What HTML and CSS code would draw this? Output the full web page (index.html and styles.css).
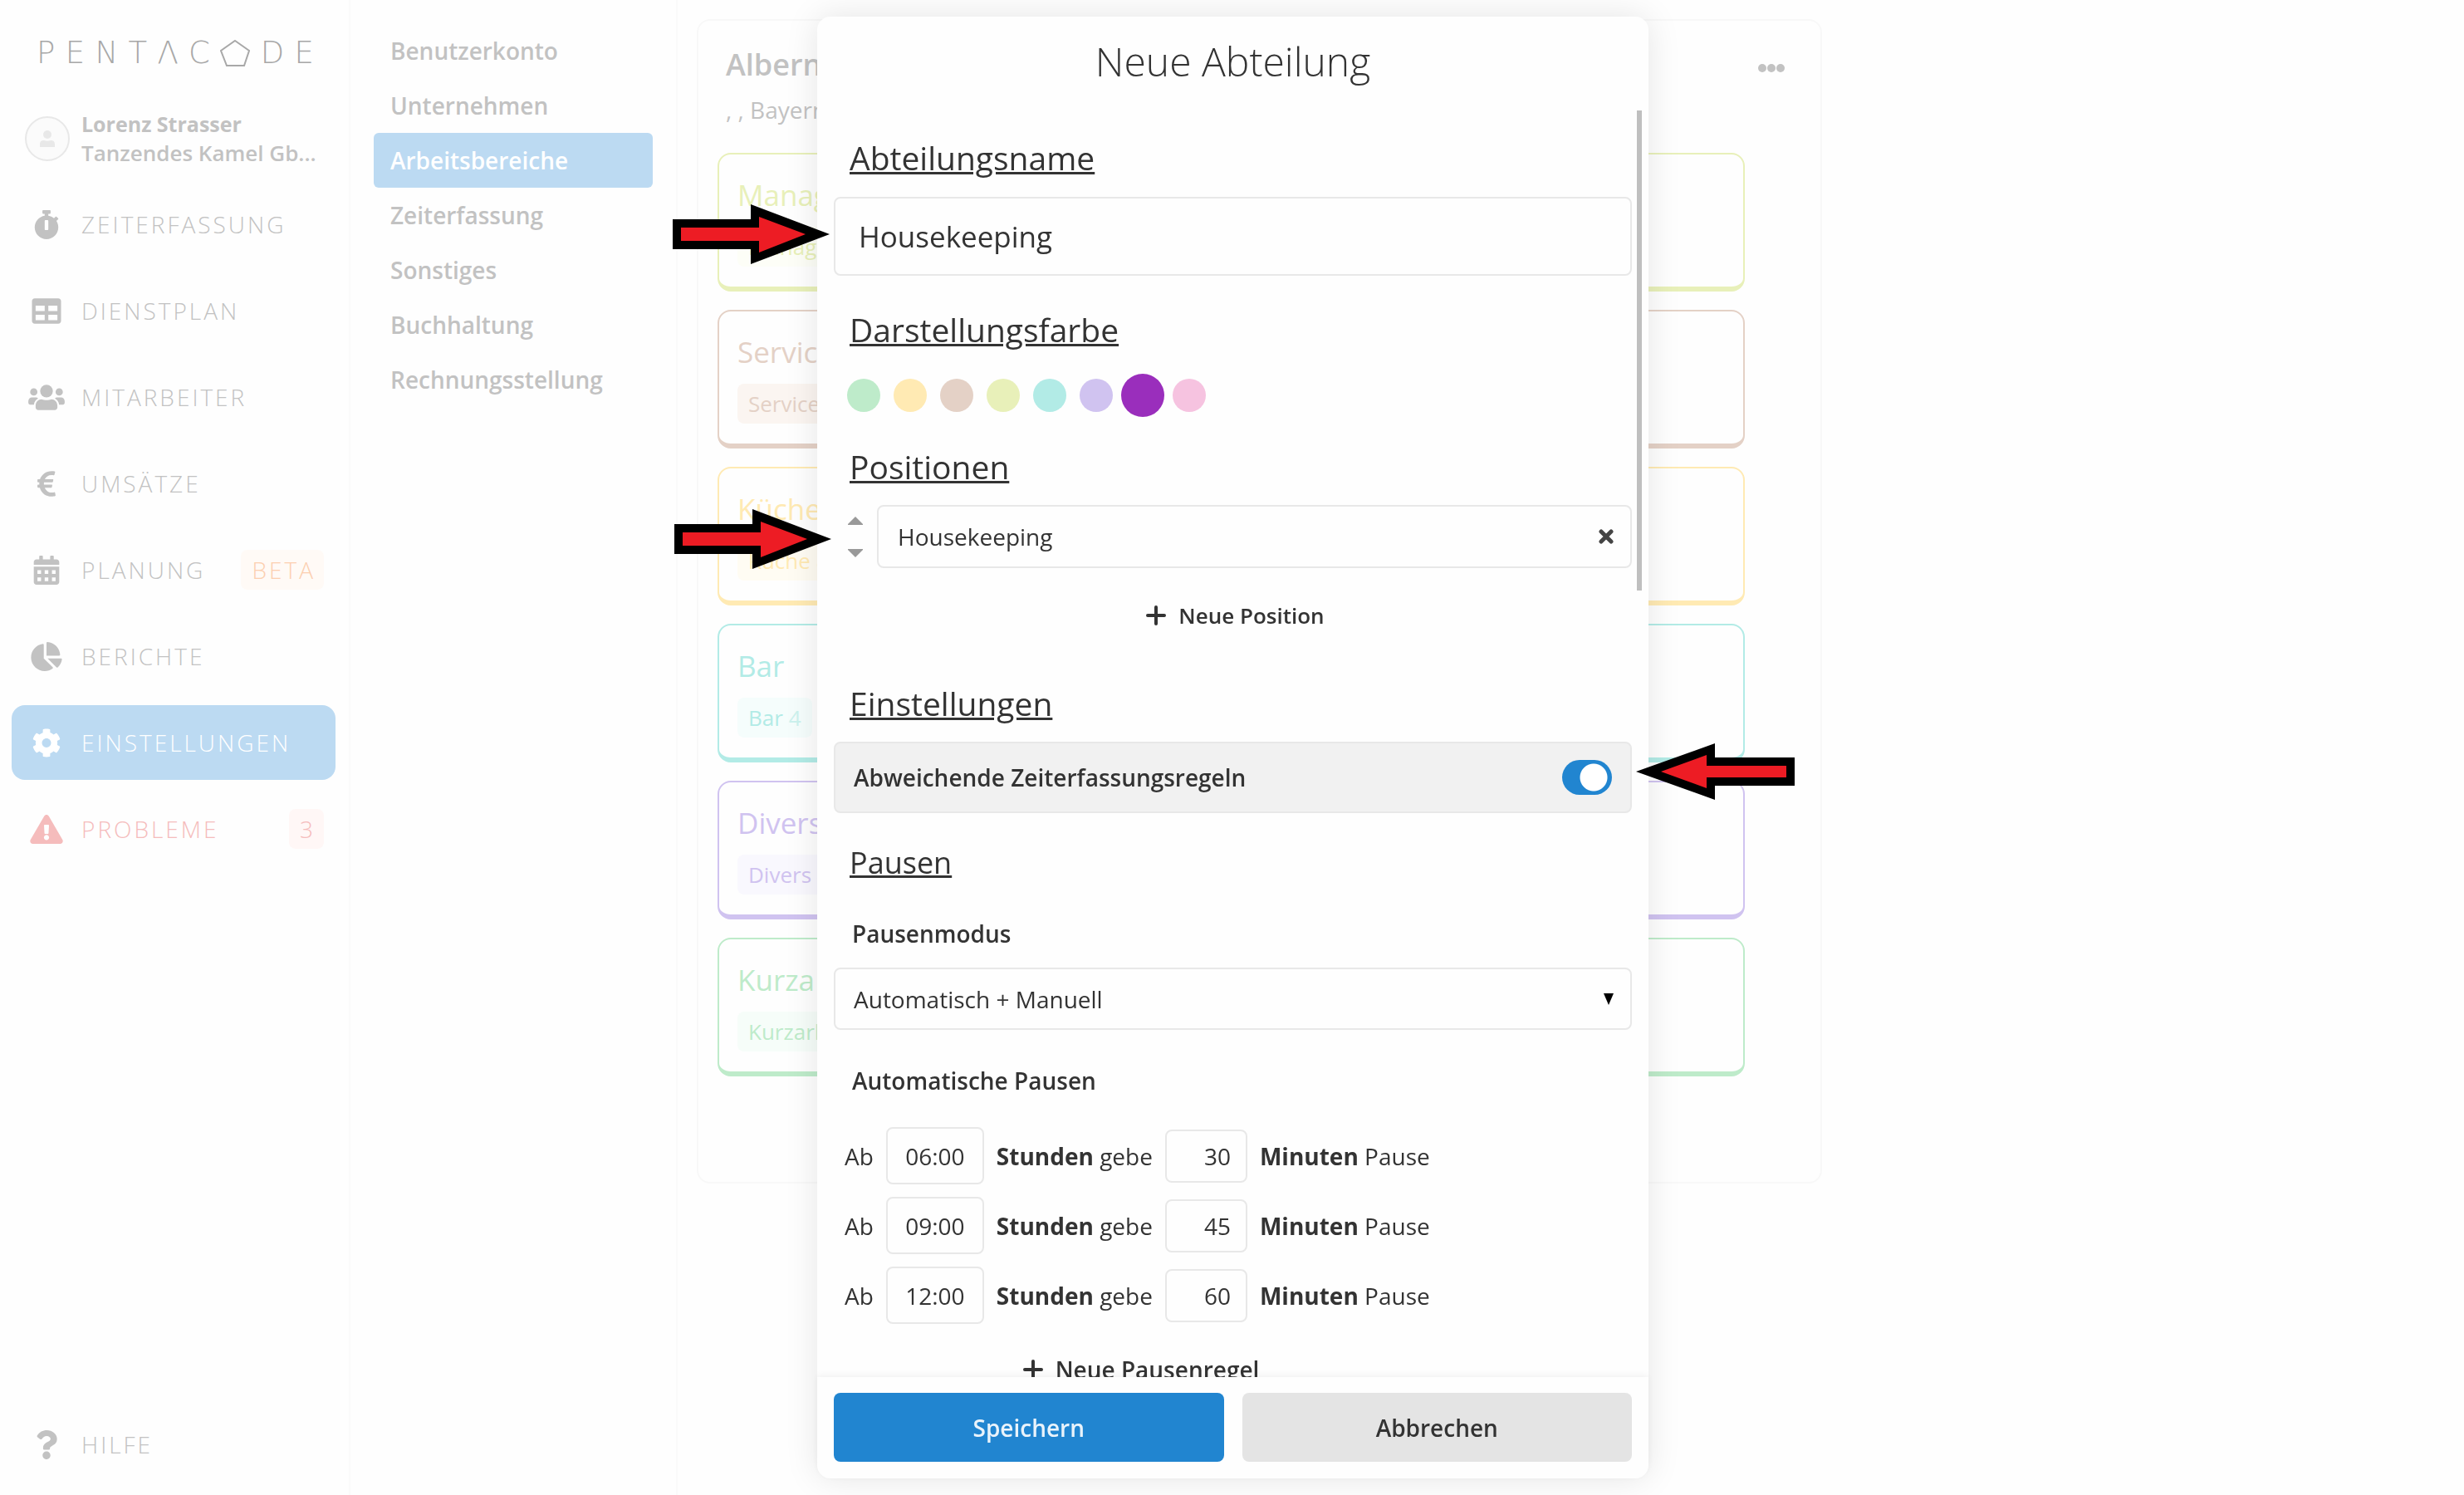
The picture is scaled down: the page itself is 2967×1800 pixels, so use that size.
FILE: index.html
```html
<!DOCTYPE html>
<html lang="de">
<head>
<meta charset="utf-8">
<meta name="viewport" content="width=device-width, initial-scale=1">
<title>Pentacode – Neue Abteilung</title>
<link rel="stylesheet" href="styles.css">
</head>
<body>
<div class="app">
  <aside class="sidebar">
    <div class="logo" role="img" aria-label="Pentacode">
      <span>P</span><span>E</span><span>N</span><span>T</span><span>Λ</span><span>C</span>
      <svg class="logo-penta" viewBox="0 0 36 33"><path d="M18 1 35 13 29 31H8L1 13Z"/></svg>
      <span>D</span><span>E</span>
    </div>
    <div class="account">
      <div class="avatar"><svg viewBox="0 0 18 20"><circle cx="9" cy="5" r="5"/><path d="M0 20v-3c0-4 2-5 5-5 3 1 5 1 8 0 3 0 5 1 5 5v3z"/></svg></div>
      <div class="account-text">
        <div class="account-name">Lorenz Strasser</div>
        <div class="account-company">Tanzendes Kamel Gb...</div>
      </div>
    </div>
    <nav class="nav">
      <a class="nav-item" href="#"><svg viewBox="0 0 448 512"><path d="M432 304c0 114.900-93.100 208-208 208S16 418.900 16 304c0-104 76.300-190.200 176-205.500V64h-28c-6.600 0-12-5.400-12-12V12c0-6.600 5.400-12 12-12h120c6.600 0 12 5.400 12 12v40c0 6.600-5.400 12-12 12h-28v34.500c37.500 5.800 71.700 21.600 99.700 44.600l27.500-27.500c4.700-4.700 12.300-4.700 17 0l28.300 28.300c4.700 4.700 4.700 12.300 0 17l-29.400 29.400-.6.6C419.700 223.300 432 262.200 432 304zm-176 36V188.500c0-6.600-5.400-12-12-12h-40c-6.600 0-12 5.400-12 12V340c0 6.600 5.400 12 12 12h40c6.600 0 12-5.400 12-12z"/></svg><span>ZEITERFASSUNG</span></a>
      <a class="nav-item" href="#"><svg viewBox="0 0 512 512"><path d="M464 32H48C21.500 32 0 53.500 0 80v352c0 26.500 21.500 48 48 48h416c26.500 0 48-21.500 48-48V80c0-26.500-21.500-48-48-48zM224 416H64v-96h160v96zm0-160H64v-96h160v96zm224 160H288v-96h160v96zm0-160H288v-96h160v96z"/></svg><span>DIENSTPLAN</span></a>
      <a class="nav-item" href="#"><svg viewBox="0 0 640 512"><circle cx="96" cy="160" r="64"/><circle cx="544" cy="160" r="64"/><circle cx="320" cy="144" r="112"/><path d="M64 256h64c18 0 34 7 45 19-40 22-69 61-75 109H32c-18 0-32-14-32-32v-32c0-35 29-64 64-64zM576 256h-64c-18 0-34 7-45 19 40 22 69 61 75 109h66c18 0 32-14 32-32v-32c0-35-29-64-64-64zM235 288c27 12 54 16 85 16s58-4 85-16c60 0 107 48 107 115v29c0 27-21 48-48 48H176c-27 0-48-21-48-48v-29c0-67 47-115 107-115z"/></svg><span>MITARBEITER</span></a>
      <a class="nav-item" href="#"><svg viewBox="0 0 320 512"><path d="M310.706 413.765c-1.314-6.630-7.835-10.872-14.424-9.369-10.692 2.439-27.422 5.413-45.426 5.413-56.763 0-101.929-34.790-121.461-85.449h113.689a12 12 0 0 0 11.708-9.369l6.373-28.360c1.686-7.502-4.019-14.631-11.708-14.631H115.220c-1.210-14.328-1.414-28.287.137-42.245H261.950a12 12 0 0 0 11.723-9.434l6.512-29.755c1.638-7.484-4.061-14.566-11.723-14.566H130.184c20.633-44.991 62.690-75.030 117.619-75.030 14.486 0 28.564 2.250 37.851 4.145 6.216 1.268 12.347-2.498 14.002-8.623l11.991-44.368c1.822-6.741-2.465-13.616-9.326-14.917C290.217 34.912 270.710 32 249.635 32 152.451 32 74.030 92.252 45.075 176H12c-6.627 0-12 5.373-12 12v29.755c0 6.627 5.373 12 12 12h21.569c-1.009 13.607-1.181 29.287-.181 42.245H12c-6.627 0-12 5.373-12 12v28.360c0 6.627 5.373 12 12 12h30.114C67.139 414.692 145.264 480 249.635 480c26.301 0 48.562-4.544 61.101-7.788 6.167-1.595 10.027-7.708 8.788-13.957l-8.818-44.490z"/></svg><span>UMSÄTZE</span></a>
      <a class="nav-item" href="#"><svg viewBox="0 0 448 512"><path fill-rule="evenodd" d="M400 64h-48V16c0-9-7-16-16-16h-32c-9 0-16 7-16 16v48H160V16c0-9-7-16-16-16h-32c-9 0-16 7-16 16v48H48C21 64 0 85 0 112v48h448v-48c0-27-21-48-48-48zM0 192v272c0 27 21 48 48 48h352c27 0 48-21 48-48V192zM64 256h64v64H64zM192 256h64v64h-64zM320 256h64v64h-64zM64 384h64v64H64zM192 384h64v64h-64zM320 384h64v64h-64z"/></svg><span>PLANUNG</span><span class="badge badge-beta">BETA</span></a>
      <a class="nav-item" href="#"><svg viewBox="0 0 544 512"><path d="M527.790 288H290.500l158.030 158.030c6.040 6.040 15.980 6.530 22.190.68 38.700-36.460 65.320-85.610 73.130-140.860 1.340-9.460-6.510-17.850-16.060-17.850zm-15.830-64.800C503.720 103.740 408.260 8.280 288.800.04 279.680-.59 272 7.100 272 16.240V240h223.770c9.140 0 16.820-7.680 16.190-16.800zM224 288V50.710c0-9.550-8.390-17.400-17.840-16.060C86.990 51.490-4.100 155.600.14 280.370 4.500 408.510 114.830 513.590 243.030 511.980c50.400-.63 96.970-16.870 135.260-44.030 7.900-5.600 8.420-17.230 1.570-24.080L224 288z"/></svg><span>BERICHTE</span></a>
      <a class="nav-item is-active" href="#"><svg viewBox="0 0 512 512"><path d="M487.400 315.700l-42.600-24.600c4.300-23.200 4.300-47 0-70.200l42.600-24.600c4.900-2.800 7.100-8.600 5.500-14-11.100-35.600-30-67.800-54.700-94.600-3.800-4.100-10-5.100-14.800-2.300L380.800 110c-17.900-15.400-38.500-27.300-60.800-35.100V25.800c0-5.600-3.900-10.500-9.400-11.700-36.700-8.200-74.300-7.800-109.200 0-5.500 1.200-9.400 6.100-9.400 11.700V75c-22.200 7.900-42.800 19.800-60.800 35.100L88.700 85.500c-4.900-2.800-11-1.900-14.800 2.300-24.700 26.700-43.600 58.900-54.700 94.600-1.700 5.400.6 11.200 5.500 14L67.300 221c-4.300 23.200-4.300 47 0 70.200l-42.600 24.600c-4.900 2.800-7.100 8.600-5.500 14 11.100 35.600 30 67.800 54.700 94.600 3.800 4.100 10 5.100 14.800 2.300l42.600-24.600c17.900 15.400 38.500 27.300 60.800 35.100v49.200c0 5.600 3.900 10.500 9.400 11.700 36.700 8.200 74.300 7.800 109.200 0 5.500-1.200 9.400-6.100 9.400-11.700v-49.200c22.200-7.900 42.800-19.800 60.800-35.100l42.600 24.600c4.900 2.800 11 1.900 14.800-2.300 24.700-26.700 43.600-58.900 54.700-94.600 1.500-5.500-.7-11.300-5.600-14.100zM256 336c-44.100 0-80-35.900-80-80s35.900-80 80-80 80 35.900 80 80-35.900 80-80 80z"/></svg><span>EINSTELLUNGEN</span></a>
      <a class="nav-item is-alert" href="#"><svg viewBox="0 0 576 512"><path d="M569.517 440.013C587.975 472.007 564.806 512 527.940 512H48.054c-36.937 0-59.999-40.055-41.577-71.987L246.423 23.985c18.467-32.009 64.720-31.951 83.154 0l239.940 416.028zM288 354c-25.405 0-46 20.595-46 46s20.595 46 46 46 46-20.595 46-46-20.595-46-46-46zm-43.673-165.346l7.418 136c.347 6.364 5.609 11.346 11.982 11.346h48.546c6.373 0 11.635-4.982 11.982-11.346l7.418-136c.375-6.874-5.098-12.654-11.982-12.654h-63.383c-6.884 0-12.356 5.780-11.981 12.654z"/></svg><span>PROBLEME</span><span class="badge badge-alert">3</span></a>
      <a class="nav-item nav-help" href="#"><svg viewBox="0 0 384 512"><path d="M202.021 0C122.202 0 70.503 32.703 29.914 91.026c-7.363 10.580-5.093 25.086 5.178 32.874l43.138 32.709c10.373 7.865 25.132 6.026 33.253-4.148 25.049-31.381 43.630-49.449 82.757-49.449 30.764 0 68.816 19.799 68.816 49.631 0 22.552-18.617 34.134-48.993 51.164-35.423 19.860-82.299 44.576-82.299 106.405V320c0 13.255 10.745 24 24 24h72.471c13.255 0 24-10.745 24-24v-5.773c0-42.860 125.268-44.645 125.268-160.627C377.504 66.256 286.902 0 202.021 0zM192 373.459c-38.196 0-69.271 31.075-69.271 69.271 0 38.195 31.075 69.270 69.271 69.270s69.271-31.075 69.271-69.271-31.075-69.270-69.271-69.270z"/></svg><span>HILFE</span></a>
    </nav>
  </aside>

  <nav class="subnav">
    <a href="#">Benutzerkonto</a>
    <a href="#">Unternehmen</a>
    <a class="is-active" href="#">Arbeitsbereiche</a>
    <a href="#">Zeiterfassung</a>
    <a href="#">Sonstiges</a>
    <a href="#">Buchhaltung</a>
    <a href="#">Rechnungsstellung</a>
  </nav>

  <main class="main">
    <section class="venue">
      <header class="venue-head">
        <div>
          <h2 class="venue-title">Albern</h2>
          <p class="venue-address">, , Bayern</p>
        </div>
        <button class="more" type="button" aria-label="Mehr"><svg viewBox="0 0 32 10"><circle cx="5" cy="5" r="5"/><circle cx="16" cy="5" r="5"/><circle cx="27" cy="5" r="5"/></svg></button>
      </header>
      <div class="departments">
        <article class="dept lime"><h3>Manag</h3><span class="tag">Manage</span></article>
        <article class="dept brown"><h3>Servic</h3><span class="tag">Service</span></article>
        <article class="dept yellow"><h3>Küche</h3><span class="tag">Küche <i>8</i></span></article>
        <article class="dept teal"><h3>Bar</h3><span class="tag">Bar <i>4</i></span></article>
        <article class="dept violet"><h3>Divers</h3><span class="tag">Divers <i>4</i></span></article>
        <article class="dept green"><h3>Kurza</h3><span class="tag">Kurzarb</span></article>
      </div>
    </section>
  </main>
</div>

<div class="overlay">
  <form class="dialog" role="dialog" aria-labelledby="dialog-title">
    <h1 class="dialog-title" id="dialog-title">Neue Abteilung</h1>
    <div class="dialog-body">
      <h2 class="heading"><label for="name">Abteilungsname</label></h2>
      <input class="field field-name" id="name" type="text" value="Housekeeping">

      <h2 class="heading heading-color">Darstellungsfarbe</h2>
      <div class="swatches" role="radiogroup" aria-label="Darstellungsfarbe">
        <input class="swatch green" type="radio" name="color" aria-label="Grün">
        <input class="swatch yellow" type="radio" name="color" aria-label="Gelb">
        <input class="swatch brown" type="radio" name="color" aria-label="Braun">
        <input class="swatch lime" type="radio" name="color" aria-label="Limette">
        <input class="swatch teal" type="radio" name="color" aria-label="Türkis">
        <input class="swatch violet" type="radio" name="color" aria-label="Violett">
        <input class="swatch purple" type="radio" name="color" aria-label="Lila" checked>
        <input class="swatch pink" type="radio" name="color" aria-label="Rosa">
      </div>

      <h2 class="heading heading-positions">Positionen</h2>
      <div class="position">
        <div class="sorter">
          <button type="button" aria-label="Nach oben"><svg viewBox="0 0 18 10"><path d="M9 0 18 9V10H0V9Z"/></svg></button>
          <button type="button" aria-label="Nach unten"><svg viewBox="0 0 18 10"><path d="M9 10 18 1V0H0V1Z"/></svg></button>
        </div>
        <div class="field position-box">
          <input type="text" value="Housekeeping" aria-label="Position">
          <button type="button" aria-label="Position entfernen"><svg viewBox="0 0 18 18"><path d="M3 3 15 15M15 3 3 15"/></svg></button>
        </div>
      </div>
      <button class="add add-position" type="button"><svg viewBox="0 0 24 24"><path d="M12 2V22M2 12H22"/></svg>Neue Position</button>

      <h2 class="heading heading-settings">Einstellungen</h2>
      <label class="toggle-row">Abweichende Zeiterfassungsregeln<input class="toggle" type="checkbox" checked></label>

      <h3 class="heading heading-breaks">Pausen</h3>
      <label class="label label-mode" for="mode">Pausenmodus</label>
      <div class="select">
        <select class="field" id="mode"><option>Automatisch + Manuell</option></select>
        <svg viewBox="0 0 12 14"><path d="M0 0H12L6 14Z"/></svg>
      </div>
      <div class="label label-auto">Automatische Pausen</div>
      <div class="rules">
        <div class="rule"><span>Ab</span><input class="field time" type="text" value="06:00" aria-label="Stunden"><span><b>Stunden</b> gebe</span><input class="field minutes" type="text" value="30" aria-label="Minuten"><span><b>Minuten</b> Pause</span></div>
        <div class="rule"><span>Ab</span><input class="field time" type="text" value="09:00" aria-label="Stunden"><span><b>Stunden</b> gebe</span><input class="field minutes" type="text" value="45" aria-label="Minuten"><span><b>Minuten</b> Pause</span></div>
        <div class="rule"><span>Ab</span><input class="field time" type="text" value="12:00" aria-label="Stunden"><span><b>Stunden</b> gebe</span><input class="field minutes" type="text" value="60" aria-label="Minuten"><span><b>Minuten</b> Pause</span></div>
        <button class="add" type="button"><svg viewBox="0 0 24 24"><path d="M12 2V22M2 12H22"/></svg>Neue Pausenregel</button>
      </div>
    </div>
    <footer class="dialog-footer">
      <button class="btn btn-primary" type="submit">Speichern</button>
      <button class="btn" type="button">Abbrechen</button>
    </footer>
    <div class="scroll-thumb"></div>
    <svg class="pointer pointer-name" viewBox="0 0 189 72"><path d="M0 18H94V0L189 36 94 72V54H0Z"/><path class="fill" d="M10 28H104V15L160 36 104 58V44H10Z"/></svg>
    <svg class="pointer pointer-position" viewBox="0 0 189 72"><path d="M0 18H94V0L189 36 94 72V54H0Z"/><path class="fill" d="M10 28H104V15L160 36 104 58V44H10Z"/></svg>
    <svg class="pointer pointer-toggle" viewBox="0 0 191 68"><path d="M191 17H95V0L0 34 95 68V51H191Z"/><path class="fill" d="M181 27H85V14L30 34 85 54V41H181Z"/></svg>
  </form>
</div>
</body>
</html>
```
FILE: styles.css
```css
* { box-sizing: border-box; }

:root {
  --text: #333;
  --dim: #c2c2c2;
  --line: #e8e8e8;
  --blue: #2185d0;
  --blue-dim: #bcdaf2;
}

body {
  margin: 0;
  background: #fefefe;
  color: var(--text);
  font: 400 28px/38px "Open Sans", "Noto Sans", sans-serif;
}

h1, h2, h3, p { margin: 0; font-weight: 400; }
a { color: inherit; text-decoration: none; }
button, input, select { font: inherit; color: inherit; margin: 0; }
button { border: 0; padding: 0; background: none; }
svg { display: block; fill: currentColor; }

.green { --c: #beebca; --bg: #f6fdf9; }
.yellow { --c: #ffeab3; --bg: #fffcf3; }
.brown { --c: #e4d1c6; --bg: #fbf5f1; }
.lime { --c: #e8f0b9; --bg: #fdfef7; }
.teal { --c: #b2ebe6; --bg: #f5fdfc; }
.violet { --c: #d0c3f0; --bg: #f9f8fe; }
.purple { --c: #9a2ebc; }
.pink { --c: #f6c3e0; }

/* Page behind the dialog */
.app {
  display: grid;
  grid-template-columns: 422px 394px 1fr;
  min-height: 100vh;
  color: var(--dim);
}

.sidebar {
  display: flex;
  flex-direction: column;
  padding: 46px 16px 16px 14px;
  border-right: 2px solid #fafafa;
}

.logo {
  display: flex;
  justify-content: space-between;
  align-items: center;
  height: 36px;
  padding: 0 26px 0 30px;
  color: #a8a8a8;
  font: 200 37px/36px "DejaVu Sans", sans-serif;
}
.logo-penta { width: 36px; fill: none; stroke: currentColor; stroke-width: 2; }

.account {
  display: flex;
  align-items: center;
  gap: 14px;
  margin-top: 50px;
  padding-left: 16px;
  font-size: 26px;
  font-weight: 600;
  line-height: 35px;
  white-space: nowrap;
}
.account-name { font-size: 25px; font-weight: 700; }
.avatar {
  display: grid;
  place-items: center;
  width: 54px;
  height: 54px;
  border: 2px solid #e8e8e8;
  border-radius: 50%;
  background: #fbfbfb;
  color: #e8e8e8;
}
.avatar svg { width: 18px; }

.nav {
  display: flex;
  flex: 1;
  flex-direction: column;
  gap: 14px;
  margin-top: 23px;
}
.nav-item {
  display: flex;
  align-items: center;
  height: 90px;
  padding-right: 14px;
  border-radius: 16px;
  font-weight: 300;
  letter-spacing: 3px;
}
.nav-item svg { width: 84px; height: 35px; }
.nav-item.is-active { background: var(--blue-dim); color: #fff; }
.nav-item.is-alert { color: #f5bcbc; }
.nav-help { margin-top: auto; }
.badge {
  margin-left: auto;
  padding: 5px 10px 5px 13px;
  border-radius: 8px;
}
.badge-beta { background: #fffaf6; color: #fccfb0; }
.badge-alert { background: #fff7f6; }

.subnav {
  padding: 28px 28px;
  border-right: 2px solid #fafafa;
  font-weight: 600;
}
.subnav a {
  display: block;
  padding: 14px 20px;
  border-radius: 6px;
}
.subnav .is-active { background: var(--blue-dim); color: #fff; }

.main { padding: 23px; }
.venue {
  max-width: 1355px;
  min-height: 1402px;
  padding: 28px 23px;
  border: 2px solid #f8f8f8;
  border-radius: 16px;
}
.venue-head { display: flex; justify-content: space-between; padding: 0 20px 0 10px; }
.venue-title { font-size: 36px; line-height: 50px; font-weight: 600; }
.venue-address { margin-top: 10px; }
.more { align-self: flex-start; padding: 24px 0 0; }
.more svg { width: 32px; }
.departments { display: grid; gap: 22px; margin: 33px 68px 0 0; }
.dept {
  height: 167px;
  padding: 22px 22px 0;
  border: 2px solid var(--c);
  border-bottom-width: 6px;
  border-radius: 16px;
  color: var(--c);
}
.dept h3 { font-size: 35px; line-height: 54px; }
.tag {
  display: inline-block;
  margin-top: 11px;
  padding: 5px 13px;
  border-radius: 8px;
  background: var(--bg);
  font-size: 26px;
}
.tag i { font-style: normal; opacity: .6; }

/* Dialog */
.overlay {
  position: fixed;
  inset: 0;
  display: flex;
  justify-content: center;
  padding: 20px 20px 20px 22px;
}
.dialog {
  position: relative;
  display: flex;
  flex-direction: column;
  width: 1001px;
  border-radius: 16px;
  background: #fefefe;
  box-shadow: 0 0 40px rgba(0, 0, 0, .1);
}
.dialog-title {
  padding: 22px 0 27px;
  font-size: 48px;
  font-weight: 300;
  line-height: 64px;
  text-align: center;
}
.dialog-body { flex: 1; min-height: 0; overflow: hidden; padding: 30px 20px 0; }

.heading {
  margin-left: 19px;
  font-size: 39px;
  line-height: 54px;
  text-decoration: underline;
}
.heading-color { margin-top: 38px; }
.heading-positions { margin-top: 39px; }
.heading-settings { margin-top: 52px; }
.heading-breaks { margin-top: 33px; font-size: 36px; }

.field {
  width: 100%;
  border: 2px solid var(--line);
  border-radius: 8px;
  background: #fefefe;
  outline: 0;
}
.field-name { display: block; height: 95px; margin-top: 20px; padding: 0 28px; font-size: 35px; }

.swatches { display: flex; align-items: center; gap: 16px; height: 40px; margin: 32px 0 0 16px; }
.swatch { appearance: none; width: 40px; height: 40px; border-radius: 50%; background: var(--c); }
.swatch:checked { width: 52px; height: 52px; margin: 0 -6px; }

.position { display: flex; align-items: center; margin-top: 19px; }
.sorter { display: grid; gap: 29px; width: 52px; justify-items: center; color: #999; }
.sorter svg { width: 18px; }
.position-box { display: flex; align-items: center; flex: 1; height: 76px; padding: 0 20px 0 23px; }
.position-box input { flex: 1; border: 0; padding: 0; background: none; outline: 0; }
.position-box svg { width: 18px; fill: none; stroke: #444; stroke-width: 5; stroke-linecap: round; }

.add {
  display: flex;
  align-items: center;
  justify-content: center;
  gap: 15px;
  width: 100%;
  height: 54px;
  font-weight: 600;
}
.add svg { width: 24px; stroke: currentColor; stroke-width: 4; stroke-linecap: round; }
.add-position { margin-top: 30px; padding-left: 6px; font-size: 26px; }

.toggle-row {
  display: flex;
  align-items: center;
  justify-content: space-between;
  height: 86px;
  margin-top: 19px;
  padding: 0 22px;
  border: 2px solid var(--line);
  border-radius: 8px;
  background: #f1f1f1;
  font-weight: 600;
}
.toggle {
  appearance: none;
  width: 60px;
  height: 42px;
  border-radius: 21px;
  background: radial-gradient(circle at 38px 21px, #fff 16px, var(--blue) 17px);
}

.label { display: block; margin-left: 22px; font-weight: 600; }
.label-mode { margin-top: 39px; }
.label-auto { margin-top: 42px; }
.select { display: grid; align-items: center; margin-top: 22px; }
.select select { grid-area: 1 / 1; appearance: none; height: 75px; padding: 0 22px; }
.select svg { grid-area: 1 / 1; justify-self: end; width: 12px; margin-right: 22px; fill: #000; pointer-events: none; }

.rules { display: grid; gap: 15px; width: 740px; margin-top: 37px; }
.rule { display: flex; align-items: center; gap: 15px; height: 69px; padding-left: 13px; white-space: nowrap; }
.rule b { font-weight: 700; }
.time { width: 118px; height: 69px; padding: 0; text-align: center; }
.minutes { width: 99px; height: 64px; padding: 0 18px; text-align: right; }
.rules .add { margin-top: 13px; }

.dialog-footer {
  display: grid;
  grid-template-columns: 1fr 1fr;
  gap: 22px;
  padding: 19px 20px 20px;
  border-radius: 0 0 16px 16px;
  background: #fefefe;
  box-shadow: 0 -2px 8px rgba(0, 0, 0, .06);
}
.btn { height: 83px; border-radius: 8px; background: #e4e4e4; font-weight: 600; }
.btn-primary { background: var(--blue); color: #e9f3fb; }

.scroll-thumb { position: absolute; top: 113px; right: 8px; width: 6px; height: 578px; background: #bfbfbf; }

/* Red pointers laid over the dialog */
.pointer { position: absolute; width: 189px; height: 72px; fill: #000; }
.pointer .fill { fill: #ed1c24; }
.pointer-name { top: 226px; left: -174px; }
.pointer-position { top: 593px; left: -172px; }
.pointer-toggle { top: 875px; left: 986px; width: 191px; height: 68px; }
```
